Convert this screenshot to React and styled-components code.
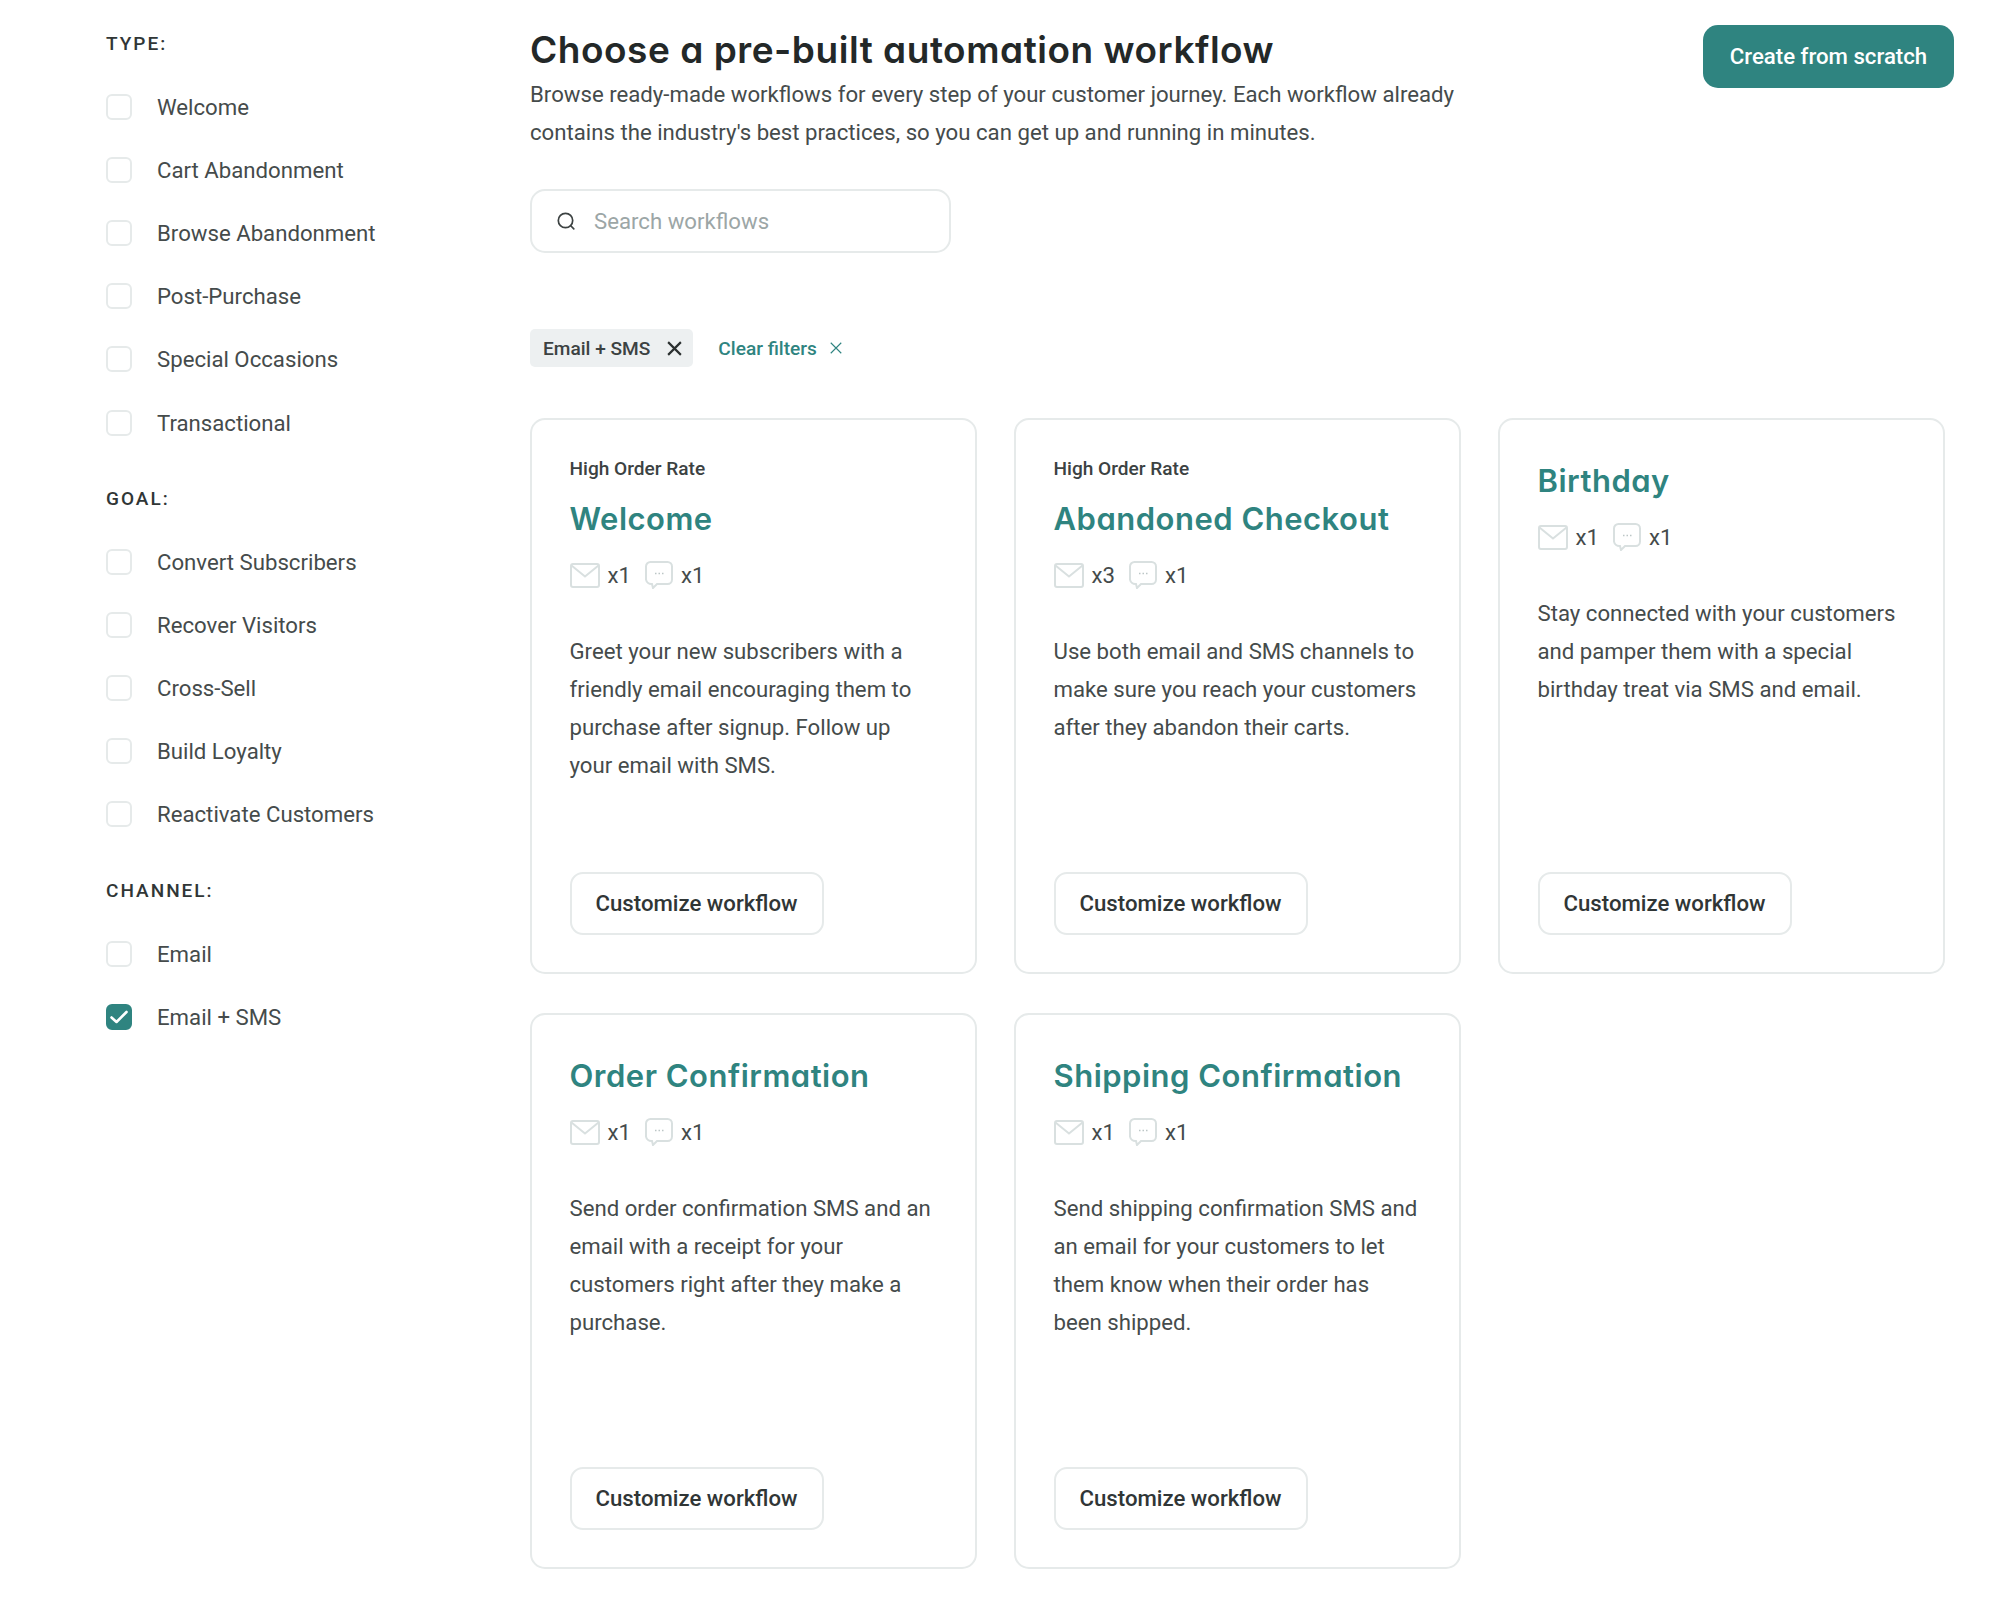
import React from "react";
import styled, { createGlobalStyle } from "styled-components";

const Global = createGlobalStyle`
  html, body { margin: 0; padding: 0; background: #fff; }
  body { font-family: Roboto, "Liberation Sans", sans-serif; color: #3c4242; }
  * { box-sizing: border-box; }
`;

const Page = styled.div`
  display: flex;
  align-items: flex-start;
  width: 1999px;
  height: 1600px;
  padding-left: 106px;
  overflow: hidden;
`;
const Sidebar = styled.aside`
  width: 424px;
  flex: none;
  padding-top: 33px;
`;
const GroupTitle = styled.div`
  font-size: 19px;
  line-height: 22px;
  font-weight: 500;
  letter-spacing: 2px;
  color: #303636;
  margin-bottom: 20px;
`;
const Group = styled.div`
  margin-bottom: 34px;
`;
const Row = styled.label`
  display: flex;
  align-items: center;
  height: 63.200px;
  font-size: 22.200px;
  color: #454b4b;
`;
const Box = styled.span`
  width: 26px;
  height: 26px;
  flex: none;
  margin-right: 25px;
  border-radius: 6px;
  display: flex;
  align-items: center;
  justify-content: center;
  border: 2px solid ${(p) => (p.$on ? "#2f8480" : "#e6eaea")};
  background: ${(p) => (p.$on ? "#2f8480" : "#fff")};
`;
const Main = styled.main`
  width: 1424px;
  flex: none;
`;
const Header = styled.header`
  display: flex;
  justify-content: space-between;
  align-items: flex-start;
`;
const Intro = styled.div`
  padding-top: 25px;
`;
const Title = styled.h1`
  margin: 0;
  font-family: Inter, sans-serif;
  font-feature-settings: "cv11" 1;
  font-weight: 600;
  font-size: 37px;
  letter-spacing: 0.530px;
  line-height: 50px;
  color: #232828;
`;
const Lede = styled.p`
  margin: 0;
  width: 960px;
  font-size: 22.200px;
  line-height: 38.200px;
  color: #454b4b;
`;
const Primary = styled.button`
  margin-top: 25px;
  width: 251px;
  height: 63px;
  padding: 0 0 2px;
  border: none;
  border-radius: 15px;
  background: #2f8480;
  color: #fff;
  font: 500 22.200px Roboto, sans-serif;
`;
const Search = styled.div`
  margin-top: 38px;
  width: 421px;
  height: 64px;
  display: flex;
  align-items: center;
  gap: 18px;
  padding-left: 24px;
  border: 2px solid #e6eaea;
  border-radius: 15px;
  font-size: 22.200px;
  color: #9ca6a6;
`;
const Filters = styled.div`
  margin-top: 76px;
  display: flex;
  align-items: center;
  gap: 25px;
`;
const Chip = styled.div`
  height: 38px;
  display: flex;
  align-items: center;
  gap: 16px;
  padding: 0 10px 0 13px;
  background: #edf0f1;
  border-radius: 5px;
  font-size: 19.100px;
  font-weight: 500;
  color: #3c4242;
`;
const Clear = styled.div`
  display: flex;
  align-items: center;
  gap: 12px;
  font-size: 19.100px;
  font-weight: 500;
  color: #2f8480;
`;
const Grid = styled.div`
  margin-top: 51px;
  display: grid;
  grid-template-columns: repeat(3, 447px);
  grid-auto-rows: 556px;
  gap: 39px 37px;
`;
const Card = styled.article`
  display: flex;
  flex-direction: column;
  padding: 37px 37px 37px 37.500px;
  border: 2px solid #e6eaea;
  border-radius: 15px;
`;
const Eyebrow = styled.div`
  font-size: 19.100px;
  line-height: 24px;
  font-weight: 500;
  color: #3c4242;
  margin-bottom: 14px;
`;
const CardTitle = styled.h2`
  margin: 0;
  font-family: Inter, sans-serif;
  font-feature-settings: "cv11" 1;
  font-weight: 600;
  font-size: 31px;
  letter-spacing: 0.500px;
  line-height: 48px;
  color: #2f8480;
`;
const Counts = styled.div`
  margin-top: 13px;
  display: flex;
  align-items: center;
  height: 38px;
  font-size: 22.200px;
  color: #454b4b;
`;
const Count = styled.span`
  display: flex;
  align-items: center;
  gap: 8px;
  margin-right: 14px;
`;
const Desc = styled.p`
  margin: 38px 0 0;
  font-size: 22.200px;
  line-height: 38px;
  color: #454b4b;
`;
const Customize = styled.button`
  margin-top: auto;
  align-self: flex-start;
  width: 254px;
  height: 63px;
  padding: 0 0 2px;
  background: #fff;
  border: 2px solid #e6eaea;
  border-radius: 13px;
  color: #303636;
  font: 500 22.200px Roboto, sans-serif;
`;

const MailIcon = () => (
  <svg width="30" height="25" viewBox="0 0 30 25" fill="none" stroke="#d9e0e0" strokeWidth="2">
    <rect x="1" y="1" width="28" height="23" rx="2" />
    <path d="M1.500 2.500 15 13.500 28.500 2.500" />
  </svg>
);
const ChatIcon = () => (
  <svg width="28" height="28" viewBox="0 0 28 28" fill="none" stroke="#d9e0e0" strokeWidth="2">
    <path d="M5.500 1h17a4.500 4.500 0 0 1 4.500 4.500v13a4.500 4.500 0 0 1-4.500 4.500H12l-4 4-1-4a5.500 5.500 0 0 1-6-4.500v-13A4.500 4.500 0 0 1 5.500 1z" />
    <path d="M10 12.500h1.500M13.500 12.500h1.500M17 12.500h1.500" strokeWidth="1.500" stroke="#bcc6c6" />
  </svg>
);
const Check = () => (
  <svg width="20" height="16" viewBox="0 0 20 16" fill="none" stroke="#fff" strokeWidth="2.600" strokeLinecap="round" strokeLinejoin="round">
    <path d="M2.500 8.500 7.500 13 17.500 3" />
  </svg>
);
const SearchIcon = () => (
  <svg width="20" height="20" viewBox="0 0 20 20" fill="none" stroke="#3c4242" strokeWidth="1.700" strokeLinecap="round">
    <circle cx="9.500" cy="9.500" r="7.200" />
    <path d="m15 15 2.800 2.800" />
  </svg>
);
const Cross = ({ size, color, weight }) => (
  <svg width={size} height={size} viewBox="0 0 16 16" fill="none" stroke={color} strokeWidth={weight}>
    <path d="M2 2l12 12M14 2 2 14" />
  </svg>
);

const groups = [
  ["TYPE:", ["Welcome", "Cart Abandonment", "Browse Abandonment", "Post-Purchase", "Special Occasions", "Transactional"]],
  ["GOAL:", ["Convert Subscribers", "Recover Visitors", "Cross-Sell", "Build Loyalty", "Reactivate Customers"]],
  ["CHANNEL:", ["Email", "Email + SMS"]],
];

const cards = [
  { tag: "High Order Rate", title: "Welcome", mail: 1, text: "Greet your new subscribers with a friendly email encouraging them to purchase after signup. Follow up your email with SMS." },
  { tag: "High Order Rate", title: "Abandoned Checkout", mail: 3, text: "Use both email and SMS channels to make sure you reach your customers after they abandon their carts." },
  { title: "Birthday", mail: 1, text: "Stay connected with your customers and pamper them with a special birthday treat via SMS and email." },
  { title: "Order Confirmation", mail: 1, text: "Send order confirmation SMS and an email with a receipt for your customers right after they make a purchase." },
  { title: "Shipping Confirmation", mail: 1, text: "Send shipping confirmation SMS and an email for your customers to let them know when their order has been shipped." },
];

export default function App() {
  return (
    <>
      <Global />
      <Page>
        <Sidebar>
          {groups.map(([name, items]) => (
            <Group key={name}>
              <GroupTitle>{name}</GroupTitle>
              {items.map((item) => (
                <Row key={item}>
                  <Box $on={item === "Email + SMS"}>{item === "Email + SMS" && <Check />}</Box>
                  {item}
                </Row>
              ))}
            </Group>
          ))}
        </Sidebar>
        <Main>
          <Header>
            <Intro>
              <Title>Choose a pre-built automation workflow</Title>
              <Lede>
                Browse ready-made workflows for every step of your customer journey. Each workflow already
                contains the industry's best practices, so you can get up and running in minutes.
              </Lede>
            </Intro>
            <Primary>Create from scratch</Primary>
          </Header>
          <Search>
            <SearchIcon />
            Search workflows
          </Search>
          <Filters>
            <Chip>
              Email + SMS
              <Cross size={17} color="#2b3030" weight={2} />
            </Chip>
            <Clear>
              Clear filters
              <Cross size={14} color="#2f8480" weight={1.300} />
            </Clear>
          </Filters>
          <Grid>
            {cards.map((c) => (
              <Card key={c.title}>
                {c.tag && <Eyebrow>{c.tag}</Eyebrow>}
                <CardTitle>{c.title}</CardTitle>
                <Counts>
                  <Count><MailIcon />x{c.mail}</Count>
                  <Count><ChatIcon />x1</Count>
                </Counts>
                <Desc>{c.text}</Desc>
                <Customize>Customize workflow</Customize>
              </Card>
            ))}
          </Grid>
        </Main>
      </Page>
    </>
  );
}
